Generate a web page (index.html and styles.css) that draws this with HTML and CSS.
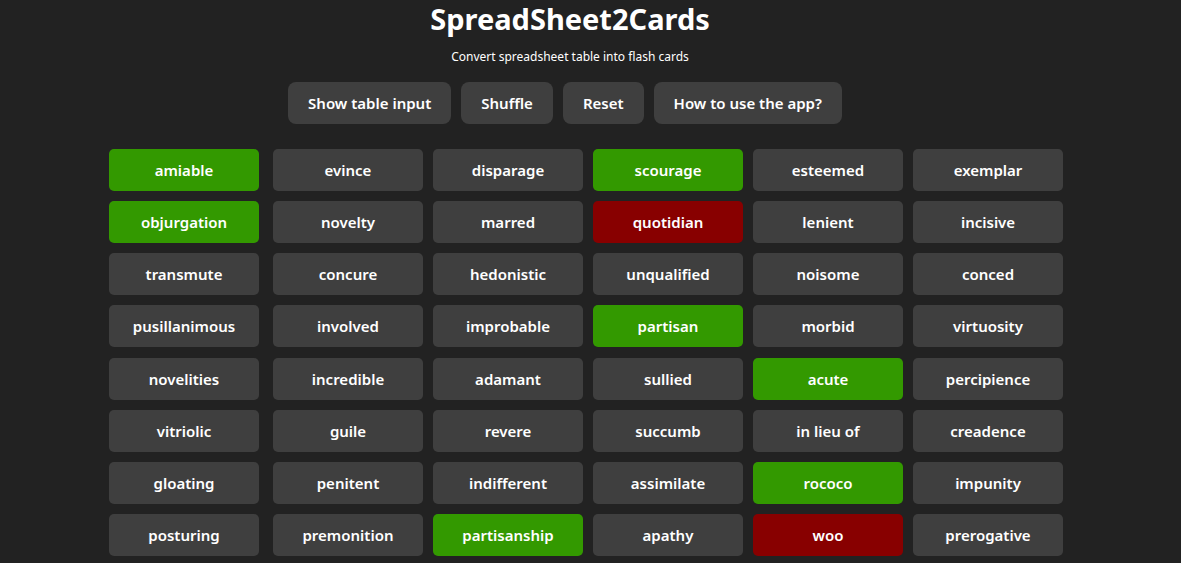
FILE: index.html
```html
<!DOCTYPE html>
<html lang="en">
<head>
<meta charset="utf-8">
<title>SpreadSheet2Cards</title>
<link rel="stylesheet" href="styles.css">
</head>
<body>
<div class="app">
  <header class="header">
    <h1 class="title">SpreadSheet2Cards</h1>
    <p class="subtitle">Convert spreadsheet table into flash cards</p>
    <nav class="actions">
      <button class="btn">Show table input</button>
      <button class="btn">Shuffle</button>
      <button class="btn">Reset</button>
      <button class="btn">How to use the app?</button>
    </nav>
  </header>
  <main class="grid">
    <div class="card known">amiable</div>
    <div class="card">evince</div>
    <div class="card">disparage</div>
    <div class="card known">scourage</div>
    <div class="card">esteemed</div>
    <div class="card">exemplar</div>

    <div class="card known">objurgation</div>
    <div class="card">novelty</div>
    <div class="card">marred</div>
    <div class="card unknown">quotidian</div>
    <div class="card">lenient</div>
    <div class="card">incisive</div>

    <div class="card">transmute</div>
    <div class="card">concure</div>
    <div class="card">hedonistic</div>
    <div class="card">unqualified</div>
    <div class="card">noisome</div>
    <div class="card">conced</div>

    <div class="card">pusillanimous</div>
    <div class="card">involved</div>
    <div class="card">improbable</div>
    <div class="card known">partisan</div>
    <div class="card">morbid</div>
    <div class="card">virtuosity</div>

    <div class="card">novelities</div>
    <div class="card">incredible</div>
    <div class="card">adamant</div>
    <div class="card">sullied</div>
    <div class="card known">acute</div>
    <div class="card">percipience</div>

    <div class="card">vitriolic</div>
    <div class="card">guile</div>
    <div class="card">revere</div>
    <div class="card">succumb</div>
    <div class="card">in lieu of</div>
    <div class="card">creadence</div>

    <div class="card">gloating</div>
    <div class="card">penitent</div>
    <div class="card">indifferent</div>
    <div class="card">assimilate</div>
    <div class="card known">rococo</div>
    <div class="card">impunity</div>

    <div class="card">posturing</div>
    <div class="card">premonition</div>
    <div class="card known">partisanship</div>
    <div class="card">apathy</div>
    <div class="card unknown">woo</div>
    <div class="card">prerogative</div>
  </main>
</div>
</body>
</html>
```

FILE: styles.css
```css
html, body {
  margin: 0;
  padding: 0;
  background: #222222;
  color: #ffffff;
  font-family: "Noto Sans", "Open Sans", "DejaVu Sans", sans-serif;
  overflow: hidden;
}

.app {
  width: 1140px;
}

.header {
  display: flex;
  flex-direction: column;
  align-items: center;
}

.title {
  margin: 0;
  padding-top: 1px;
  font-size: 29px;
  font-weight: 700;
  line-height: 36px;
  letter-spacing: 0;
}

.subtitle {
  margin: 12px 0 0;
  font-size: 12px;
  line-height: 16px;
}

.actions {
  display: flex;
  gap: 10px;
  margin-top: 17px;
  margin-left: -10px;
}

.btn {
  height: 42px;
  padding: 0 20px;
  border: none;
  border-radius: 8px;
  background: #3f3f3f;
  color: #ffffff;
  font-family: inherit;
  font-size: 15px;
  font-weight: 600;
}

.grid {
  display: grid;
  grid-template-columns: 154px repeat(5, 150px);
  grid-auto-rows: 42px;
  column-gap: 10px;
  row-gap: 10.15px;
  margin: 25px 0 0 109px;
}

.card {
  width: 150px;
  display: flex;
  align-items: center;
  justify-content: center;
  border-radius: 5px;
  background: #3f3f3f;
  font-size: 15px;
  font-weight: 600;
}

.card.known {
  background: #339900;
}

.card.unknown {
  background: #880000;
}
```
